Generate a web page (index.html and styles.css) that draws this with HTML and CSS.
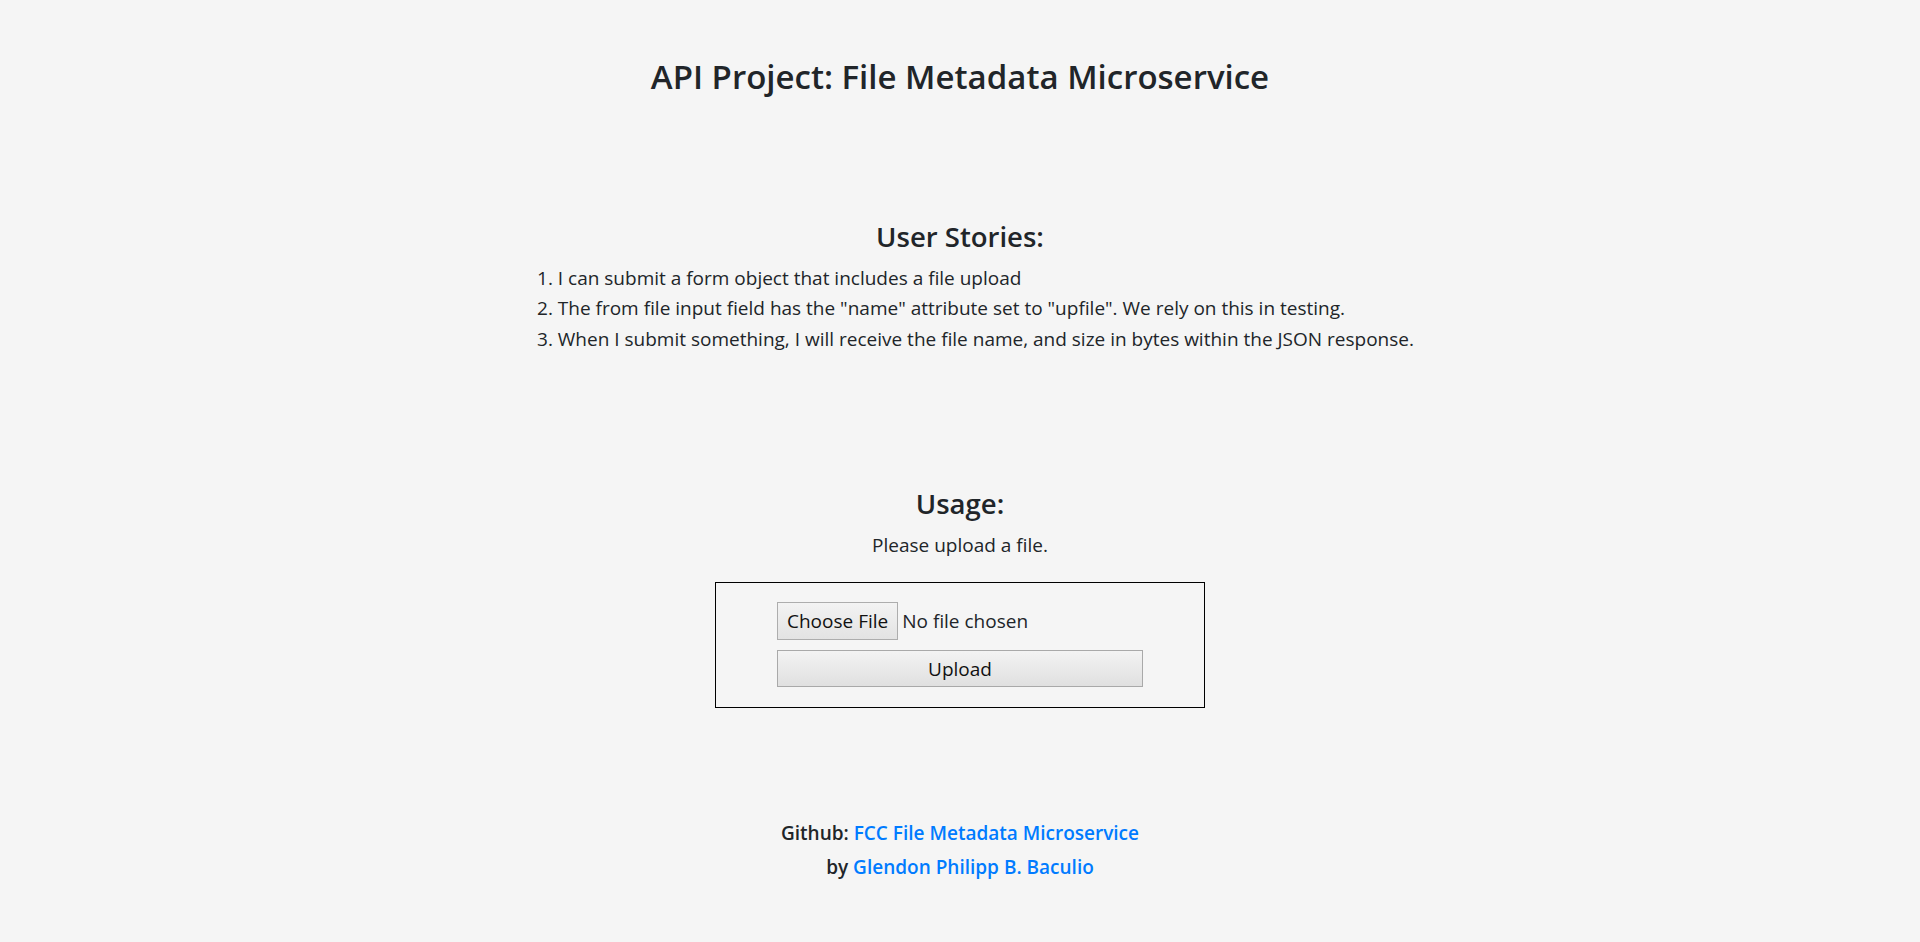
FILE: index.html
```html
<!DOCTYPE html>
<html lang="en">
<head>
<meta charset="utf-8">
<title>File Metadata Microservice</title>
<link rel="stylesheet" href="styles.css">
</head>
<body>
<div class="container">
  <h1 class="title">API Project: File Metadata Microservice</h1>

  <section class="stories">
    <h3 class="heading">User Stories:</h3>
    <ol class="story-list">
      <li>I can submit a form object that includes a file upload</li>
      <li>The from file input field has the "name" attribute set to "upfile". We rely on this in testing.</li>
      <li>When I submit something, I will receive the file name, and size in bytes within the JSON response.</li>
    </ol>
  </section>

  <section class="usage">
    <h3 class="heading">Usage:</h3>
    <p class="usage-text">Please upload a file.</p>
    <form class="upload-form" enctype="multipart/form-data" method="POST" action="/api/fileanalyse">
      <input class="file-input" type="file" name="upfile">
      <input class="upload-btn" type="submit" value="Upload">
    </form>
  </section>

  <footer class="footer">
    <p class="footer-line">Github: <a href="#">FCC File Metadata Microservice</a></p>
    <p class="footer-line">by <a href="#">Glendon Philipp B. Baculio</a></p>
  </footer>
</div>
</body>
</html>
```

FILE: styles.css
```css
* { box-sizing: border-box; }

html, body {
  margin: 0;
  padding: 0;
}

body {
  background: #f5f5f5;
  color: #212529;
  font-family: "Open Sans", "Noto Sans", "Liberation Sans", sans-serif;
  font-size: 19px;
  line-height: 29px;
}

.container {
  display: flex;
  flex-direction: column;
  align-items: center;
}

.title {
  margin: 57px 0 0;
  font-size: 33px;
  font-weight: 600;
  line-height: 1.2;
  text-align: center;
}

.heading {
  margin: 0;
  font-size: 27.5px;
  font-weight: 600;
  line-height: 1.2;
  text-align: center;
}

.stories {
  margin-top: 123px;
  width: 846px;
  display: flex;
  flex-direction: column;
  align-items: center;
}

.story-list {
  align-self: stretch;
  margin: 10px 0 0;
  padding: 0;
  list-style: none;
  counter-reset: story;
  white-space: nowrap;
  font-size: 19px;
  line-height: 30.5px;
}

.story-list li {
  counter-increment: story;
}

.story-list li::before {
  content: counter(story) ". ";
}

.usage {
  margin-top: 133px;
  display: flex;
  flex-direction: column;
  align-items: center;
}

.usage-text {
  margin: 11px 0 0;
  font-size: 19px;
}

.upload-form {
  margin-top: 22px;
  width: 490px;
  border: 1px solid #000;
  padding: 19px 61px 20px;
  display: flex;
  flex-direction: column;
  align-items: flex-start;
  gap: 10px;
}

.file-input {
  font-family: inherit;
  font-size: 19px;
  color: #212529;
  height: 38px;
}

.file-input::file-selector-button {
  font-family: inherit;
  font-size: 19px;
  height: 38px;
  padding: 0 9px;
  margin-right: 4px;
  color: #111;
  background: linear-gradient(#f3f3f3, #e3e3e3);
  border: 1px solid #adadad;
  border-radius: 0;
}

.upload-btn {
  width: 100%;
  height: 37px;
  font-family: inherit;
  font-size: 19px;
  color: #111;
  background: linear-gradient(#f3f3f3, #e0e0e0);
  border: 1px solid #a9a9a9;
  border-radius: 0;
  padding: 0;
}

.footer {
  margin-top: 108px;
  text-align: center;
  font-size: 19px;
  font-weight: 600;
}

.footer-line {
  margin: 0;
  line-height: 34px;
}

.footer a {
  color: #007bff;
  text-decoration: none;
}
```
